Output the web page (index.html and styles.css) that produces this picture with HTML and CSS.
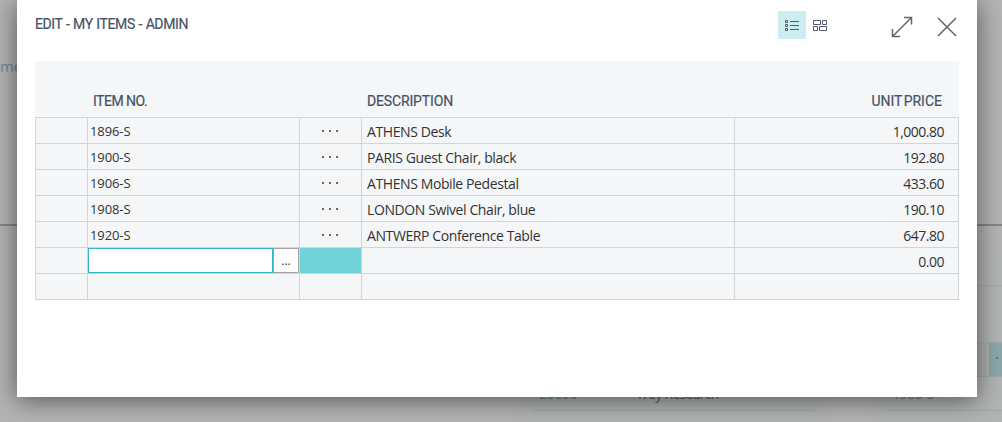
FILE: index.html
```html
<!DOCTYPE html>
<html lang="en">
<head>
<meta charset="utf-8">
<title>Edit - My Items - Admin</title>
<link rel="stylesheet" href="styles.css">
</head>
<body>
<div class="page">
  <div class="page-top"><span class="page-link">me</span></div>
  <div class="page-parts">
    <section class="part">
      <div class="part-row part-customer"><span class="part-link">20000</span><span class="part-text">Trey Research</span></div>
    </section>
    <section class="part part-items">
      <div class="strip"></div>
      <div class="selected"><span class="dot">·</span></div>
      <div class="part-row"><span class="part-link">1900-S</span></div>
    </section>
  </div>
</div>
<main class="dialog">
  <header class="dialog-head">
    <h1 class="title">EDIT - MY ITEMS - ADMIN</h1>
    <div class="views">
      <span class="view view-active"><svg width="28" height="28" viewBox="0 0 28 28" fill="none" stroke="#505c6d"><path d="M7.5 9.5h2v2h-2zM7.5 13.5h2v2h-2zM7.5 17.5h2v2h-2zM12 10.5h9M12 14.5h9M12 18.5h9"/></svg></span>
      <span class="view"><svg width="28" height="28" viewBox="0 0 28 28" fill="none" stroke="#505c6d"><path d="M7.500 9.500h7v4h-7zM16.500 9.500h4v4h-4zM7.500 15.500h4v4h-4zM13.500 15.500h7v4h-7z"/></svg></span>
    </div>
    <svg class="expand" width="22" height="22" viewBox="0 0 22 22" fill="none" stroke="#666" stroke-width="1.500"><path d="M1.500 20.500L20.500 1.500M13 1.500h7.500V8.500M1.500 13v7.500H9"/></svg>
    <svg class="close" width="20" height="20" viewBox="0 0 20 20" fill="none" stroke="#606060" stroke-width="1.500"><path d="M1 1L19 19M19 1L1 19"/></svg>
  </header>
  <div class="grid">
    <div class="head"><span></span><span class="h-item">ITEM NO.</span><span></span><span class="h-desc">DESCRIPTION</span><span class="h-price">UNIT PRICE</span></div>
    <div class="row"><span></span><span class="item">1896-S</span><span class="more"><i></i><i></i><i></i></span><span class="desc">ATHENS Desk</span><span class="price">1,000.80</span></div>
    <div class="row"><span></span><span class="item">1900-S</span><span class="more"><i></i><i></i><i></i></span><span class="desc">PARIS Guest Chair, black</span><span class="price">192.80</span></div>
    <div class="row"><span></span><span class="item">1906-S</span><span class="more"><i></i><i></i><i></i></span><span class="desc">ATHENS Mobile Pedestal</span><span class="price">433.60</span></div>
    <div class="row"><span></span><span class="item">1908-S</span><span class="more"><i></i><i></i><i></i></span><span class="desc">LONDON Swivel Chair, blue</span><span class="price">190.10</span></div>
    <div class="row"><span></span><span class="item">1920-S</span><span class="more"><i></i><i></i><i></i></span><span class="desc">ANTWERP Conference Table</span><span class="price">647.80</span></div>
    <div class="row"><span></span><span class="edit"><b class="field"></b><b class="lookup">...</b></span><span class="current"></span><span></span><span class="price">0.00</span></div>
    <div class="row"><span></span><span></span><span></span><span></span><span></span></div>
  </div>
</main>
</body>
</html>
```
FILE: styles.css
```css
* { box-sizing: border-box; }
body { margin: 0; width: 1002px; height: 422px; overflow: hidden; font-family: "Open Sans", "Noto Sans", sans-serif; }
.page { height: 422px; background: #b4b4b4; overflow: hidden; }
.page-top { height: 226px; border-bottom: 2px solid #82868c; padding-top: 55px; }
.page-link { display: block; font-size: 15px; line-height: 22px; color: #6a8c8f; letter-spacing: -.5px; }
.page-parts { display: grid; grid-template-columns: 311px 180px; column-gap: 42px; padding: 15px 0 0 518px; }
.part { height: 181px; background: #b1b4b3; padding: 0 15px 11px; display: flex; flex-direction: column; justify-content: flex-end; }
.part-row { height: 34px; border-bottom: 1px solid #a3a7a6; padding: 7px 6px 0; font-size: 14px; line-height: 20px; display: flex; white-space: nowrap; flex: none; }
.part-link { color: #6a8688; width: 97px; letter-spacing: -.4px; }
.part-text { color: #5c5c5c; letter-spacing: -.7px; }
.part-items { padding-right: 0; }
.strip { height: 45px; border-bottom: 1px solid #a5a8a7; margin-bottom: 56px; flex: none; }
.selected { height: 35px; border: solid #a3a7a6; border-width: 1px 0; flex: none; background: linear-gradient(90deg, #b0b0b0 103px, #8aa8ab 103px); padding-left: 109px; }
.dot { display: block; width: 4px; line-height: 31px; color: #526d70; font-size: 16px; }

.dialog { position: absolute; left: 17px; top: 0; width: 960px; height: 397px; background: #fff; padding: 0 18px; box-shadow: 0 3px 24px rgba(0,0,0,.54); }
.dialog-head { height: 61px; display: flex; align-items: flex-start; }
.title { margin: 0; padding-top: 14px; font: 400 14px/20px Roboto, sans-serif; color: #465266; -webkit-text-stroke: .2px #465266; letter-spacing: -.4px; word-spacing: .6px; width: 743px; white-space: nowrap; }
.views { display: flex; margin-top: 11px; }
.view { width: 28px; height: 28px; }
.view svg { display: block; }
.view-active { background: #cceef0; }
.expand { margin: 16px 0 0 57px; }
.close { margin: 17px 0 0 24px; flex: none; }

.grid { background: #f5f6f8; }
.head, .row { display: grid; grid-template-columns: 52px 212px 62px 373px 225px; }
.head { height: 56px; padding-top: 30px; font: 400 14px/20px Roboto, sans-serif; color: #465266; -webkit-text-stroke: .2px #465266; white-space: nowrap; }
.h-item { padding-left: 6px; letter-spacing: -.5px; }
.h-desc { padding-left: 6px; letter-spacing: -.15px; }
.h-price { text-align: right; padding-right: 17px; letter-spacing: 0; word-spacing: -2px; }
.row { height: 26px; border-top: 1px solid #d1d4d8; border-right: 1px solid #d1d4d8; grid-template-columns: 52px 212px 62px 373px 224px; }
.row > span { border-left: 1px solid #d1d4d8; height: 25px; white-space: nowrap; }
.row:last-child { height: 27px; border-bottom: 1px solid #d1d4d8; }
.row .item { font-size: 13px; line-height: 26px; padding-left: 2px; color: #333; letter-spacing: -.1px; }
.row .desc { font-size: 14px; line-height: 28px; padding-left: 5px; color: #333; letter-spacing: -.4px; }
.row .price { font-size: 14px; line-height: 28px; text-align: right; padding-right: 14px; color: #333; letter-spacing: -.5px; }
.more { display: flex; gap: 5px; padding: 12px 0 0 22px; }
.more i { width: 2px; height: 2px; background: #666; }
.edit { display: flex; }
.field { width: 185px; height: 25px; border: 1px solid #31b5c2; background: #fff; }
.lookup { width: 26px; height: 25px; border: 1px solid #a6a6a6; background: #fdfdfd; font: 12px/24px "Open Sans", sans-serif; text-align: center; color: #333; }
.row .current { background: #72d2da; }
```
